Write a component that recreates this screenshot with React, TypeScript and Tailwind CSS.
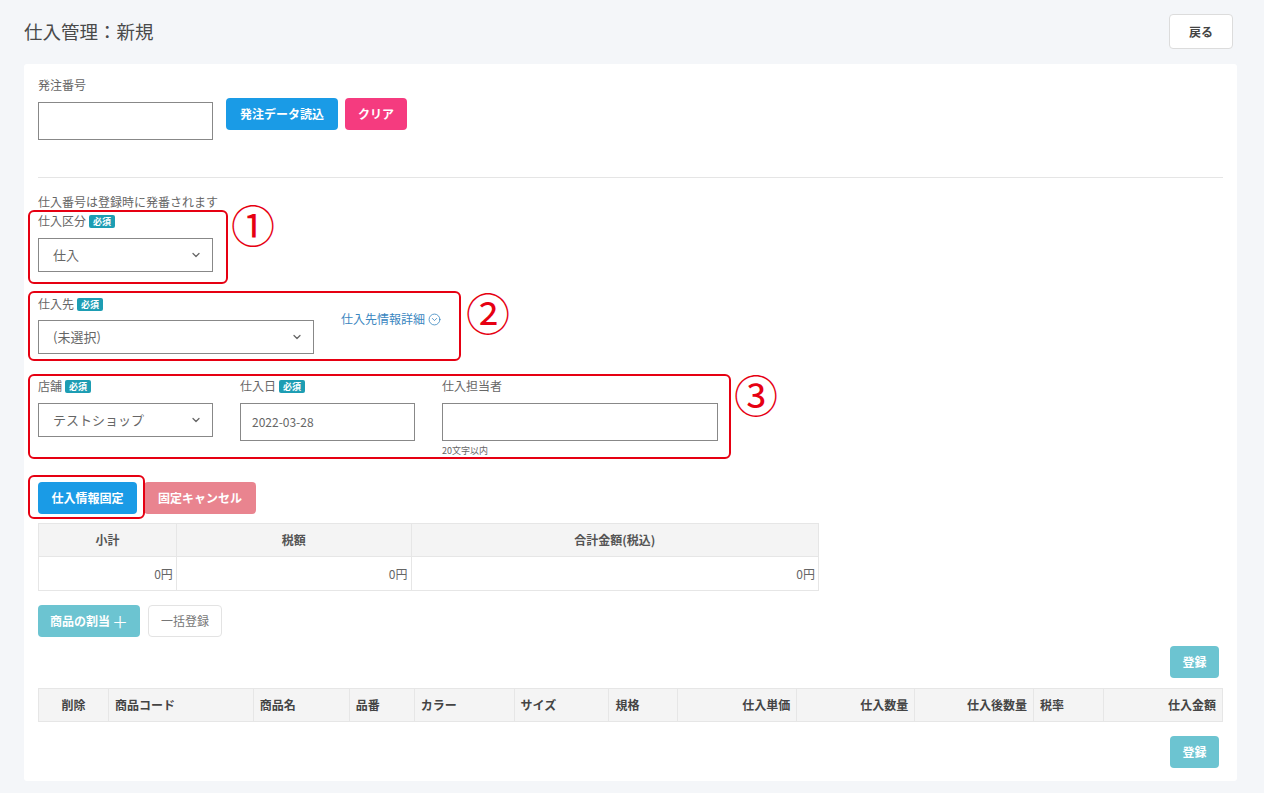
import { ChevronDown, CircleChevronDown } from "lucide-react";

const font = { fontFamily: '"Noto Sans CJK JP", "Noto Sans", sans-serif' };

const productColumns = [
  { label: "削除", width: "w-[70px]", align: "text-center" },
  { label: "商品コード", width: "w-[145px]", align: "text-left" },
  { label: "商品名", width: "w-[96px]", align: "text-left" },
  { label: "品番", width: "w-[65px]", align: "text-left" },
  { label: "カラー", width: "w-[100px]", align: "text-left" },
  { label: "サイズ", width: "w-[95px]", align: "text-left" },
  { label: "規格", width: "w-[69px]", align: "text-left" },
  { label: "仕入単価", width: "w-[119px]", align: "text-right" },
  { label: "仕入数量", width: "w-[118px]", align: "text-right" },
  { label: "仕入後数量", width: "w-[119px]", align: "text-right" },
  { label: "税率", width: "w-[70px]", align: "text-left" },
  { label: "仕入金額", width: "w-[119px]", align: "text-right" },
] as const;

export default function App() {
  return (
    <div className="min-h-[793px] bg-[#f4f6f9] text-[#555]" style={font}>
      <header className="flex items-start justify-between px-[24px] pt-[14px]">
        <h1 className="mt-[2px] text-[18.5px] leading-[30px] text-[#4a4a4a]">仕入管理：新規</h1>
        <button className="mr-[7px] h-[35px] w-[64px] rounded-[4px] border border-[#dcdcdc] bg-white text-[12px] font-bold text-[#444]">
          戻る
        </button>
      </header>

      <main className="relative ml-[24px] mr-[27px] mt-[15px] rounded-[3px] bg-white px-[14px] pb-[13px] pt-[12px]">
        <p className="text-[12px] leading-[18px] text-[#666]">発注番号</p>
        <div className="mt-[4px] flex items-start gap-[13px]">
          <input className="mt-[4px] h-[38px] w-[175px] border border-[#888] outline-none" />
          <div className="flex gap-[7px]">
            <button className="h-[32px] rounded-[4px] bg-[#1a9be6] px-[14px] text-[12px] font-bold text-white">
              発注データ読込
            </button>
            <button className="h-[32px] w-[62px] rounded-[4px] bg-[#f53b7f] text-[12px] font-bold text-white">
              クリア
            </button>
          </div>
        </div>

        <div className="mt-[37px] border-t border-[#e5e5e5]" />

        <p className="mt-[15px] text-[12px] leading-[18px] text-[#666]">仕入番号は登録時に発番されます</p>

        <Label text="仕入区分" required className="mt-px" />
        <Select value="仕入" width="w-[175px]" className="mt-[8px]" />

        <div className="mt-[23px] flex items-start">
          <div>
            <Label text="仕入先" required />
            <Select value="(未選択)" width="w-[276px]" className="mt-[7px]" />
          </div>
          <a className="ml-[27px] mt-[15px] flex items-center gap-[3px] text-[12px] leading-[18px] text-[#3a86bf]">
            仕入先情報詳細
            <CircleChevronDown size={13} strokeWidth={1.5} />
          </a>
        </div>

        <div className="mt-[23px] flex items-start gap-[27px]">
          <div>
            <Label text="店舗" required />
            <Select value="テストショップ" width="w-[175px]" className="mt-[8px]" />
          </div>
          <div>
            <Label text="仕入日" required />
            <div className="mt-[8px] flex h-[38px] w-[175px] items-center border border-[#888] px-[11px] text-[12px] text-[#666]">
              2022-03-28
            </div>
          </div>
          <div>
            <Label text="仕入担当者" />
            <input className="mt-[8px] block h-[38px] w-[276px] border border-[#888] outline-none" />
            <p className="mt-[4px] text-[9px] leading-[12px] text-[#666]">20文字以内</p>
          </div>
        </div>

        <div className="mt-[25px] flex gap-[7px]">
          <button className="h-[32px] w-[99px] rounded-[4px] bg-[#1a9be6] text-[12px] font-bold text-white">
            仕入情報固定
          </button>
          <button className="h-[32px] w-[112px] rounded-[4px] bg-[#e9848f] text-[12px] font-bold text-white">
            固定キャンセル
          </button>
        </div>

        <table className="mt-[9px] w-[781px] border-collapse text-[12px]">
          <thead>
            <tr className="h-[33px] bg-[#f4f4f4] font-bold text-[#555]">
              <th className="w-[138px] border border-[#e6e6e6]">小計</th>
              <th className="w-[235px] border border-[#e6e6e6]">税額</th>
              <th className="w-[408px] border border-[#e6e6e6]">合計金額(税込)</th>
            </tr>
          </thead>
          <tbody>
            <tr className="h-[34px] text-right text-[#666]">
              <td className="border border-[#e6e6e6] pr-[3px]">0円</td>
              <td className="border border-[#e6e6e6] pr-[3px]">0円</td>
              <td className="border border-[#e6e6e6] pr-[3px]">0円</td>
            </tr>
          </tbody>
        </table>

        <div className="mt-[14px] flex gap-[8px]">
          <button className="flex h-[32px] w-[102px] items-center justify-center gap-[2px] rounded-[4px] bg-[#6cc4d1] text-[12px] font-bold text-white">
            商品の割当
            <span className="text-[16px] font-normal">＋</span>
          </button>
          <button className="h-[32px] w-[74px] rounded-[4px] border border-[#e3e3e3] bg-white text-[12px] text-[#777]">
            一括登録
          </button>
        </div>

        <div className="mt-[9px] flex justify-end pr-[4px]">
          <RegisterButton />
        </div>

        <table className="mt-[10px] w-full border-collapse text-[12px]">
          <thead>
            <tr className="h-[33px] border border-[#e6e6e6] bg-[#f4f4f4] font-bold text-[#444]">
              {productColumns.map((col) => (
                <th key={col.label} className={`${col.width} ${col.align} border-l border-[#e6e6e6] px-[6px] first:border-l-0`}>
                  {col.label}
                </th>
              ))}
            </tr>
          </thead>
        </table>

        <div className="mt-[14px] flex justify-end pr-[4px]">
          <RegisterButton />
        </div>

        {/* annotation boxes */}
        <div className="pointer-events-none absolute left-[4px] top-[146px] h-[74px] w-[200px] rounded-[6px] border-2 border-[#e60012]" />
        <Circled n="①" className="left-[207px] top-[138px]" />
        <div className="pointer-events-none absolute left-[4px] top-[227px] h-[70px] w-[433px] rounded-[6px] border-2 border-[#e60012]" />
        <Circled n="②" className="left-[442px] top-[226px]" />
        <div className="pointer-events-none absolute left-[4px] top-[310px] h-[85px] w-[703px] rounded-[6px] border-2 border-[#e60012]" />
        <Circled n="③" className="left-[710px] top-[308px]" />
        <div className="pointer-events-none absolute left-[4px] top-[411px] h-[44px] w-[117px] rounded-[6px] border-2 border-[#e60012]" />
      </main>
    </div>
  );
}

function Label({ text, required, className = "" }: { text: string; required?: boolean; className?: string }) {
  return (
    <p className={`flex items-center gap-[3px] text-[12px] leading-[18px] text-[#666] ${className}`}>
      {text}
      {required ? (
        <span className="rounded-[2px] bg-[#1d9db3] px-[4px] text-[9px] font-bold leading-[13px] text-white">必須</span>
      ) : null}
    </p>
  );
}

function Select({ value, width, className = "" }: { value: string; width: string; className?: string }) {
  return (
    <div className={`flex h-[34px] ${width} items-center justify-between border border-[#888] pl-[14px] pr-[10px] text-[13px] text-[#666] ${className}`}>
      <span>{value}</span>
      <ChevronDown size={12} strokeWidth={2.5} className="text-[#666]" />
    </div>
  );
}

function RegisterButton() {
  return (
    <button className="h-[32px] w-[49px] rounded-[4px] bg-[#6cc4d1] text-[12px] font-bold text-white">登録</button>
  );
}

function Circled({ n, className }: { n: string; className: string }) {
  return (
    <span className={`pointer-events-none absolute text-[44px] leading-none text-[#e60012] ${className}`}>{n}</span>
  );
}
